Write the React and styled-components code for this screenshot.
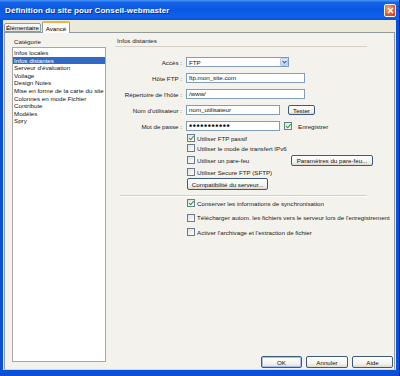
import styled, { createGlobalStyle } from "styled-components";

const GlobalStyle = createGlobalStyle`
  html, body {
    margin: 0;
    padding: 0;
    background: #ece9d8;
  }
  body {
    font-family: "Liberation Sans", Arial, sans-serif;
  }
`;

const categories = [
  "Infos locales",
  "Infos distantes",
  "Serveur d'évaluation",
  "Voilage",
  "Design Notes",
  "Mise en forme de la carte du site",
  "Colonnes en mode Fichier",
  "Contribute",
  "Modèles",
  "Spry",
];

export default function App() {
  return (
    <>
      <GlobalStyle />
      <Window>
        <TitleBar>
          <Title>Définition du site pour Conseil-webmaster</Title>
          <CloseButton>
            <svg width="7" height="7" viewBox="0 0 7 7">
              <path d="M1 1L6 6M6 1L1 6" stroke="#fff" strokeWidth="1.4" />
            </svg>
          </CloseButton>
        </TitleBar>
        <Body>
          <TabStrip>
            <Tab>Élémentaire</Tab>
            <Tab active>Avancé</Tab>
          </TabStrip>
          <Panel>
            <Sidebar>
              <SideLabel>Catégorie</SideLabel>
              <List>
                {categories.map((c) => (
                  <ListItem key={c} selected={c === "Infos distantes"}>
                    {c}
                  </ListItem>
                ))}
              </List>
            </Sidebar>
            <Main>
              <Heading>Infos distantes</Heading>
              <Form>
                <Label>Accès&nbsp;:</Label>
                <Field>
                  <Select>
                    <span>FTP</span>
                    <DropArrow>
                      <svg width="5" height="4" viewBox="0 0 5 4">
                        <path d="M0.5 0.8L2.5 2.8L4.5 0.8" stroke="#4d6185" strokeWidth="1.2" fill="none" />
                      </svg>
                    </DropArrow>
                  </Select>
                </Field>
                <Label>Hôte FTP&nbsp;:</Label>
                <Field>
                  <Input w={119}>ftp.mon_site.com</Input>
                </Field>
                <Label>Répertoire de l'hôte&nbsp;:</Label>
                <Field>
                  <Input w={119}>/www/</Input>
                </Field>
                <Label>Nom d'utilisateur&nbsp;:</Label>
                <Field gap={8}>
                  <Input w={94}>nom_utilisateur</Input>
                  <Button w={27} h={10}>Tester</Button>
                </Field>
                <Label>Mot de passe&nbsp;:</Label>
                <Field gap={4}>
                  <Input w={94}>
                    <Dots>•••••••••••</Dots>
                  </Input>
                  <Check checked />
                  <Text>Enregistrer</Text>
                </Field>
              </Form>
              <Options>
                <OptionRow>
                  <Check checked />
                  <Text>Utiliser FTP passif</Text>
                </OptionRow>
                <OptionRow>
                  <Check />
                  <Text>Utiliser le mode de transfert IPv6</Text>
                </OptionRow>
                <OptionRow tall>
                  <OptionLabel>
                    <Check />
                    <Text>Utiliser un pare-feu</Text>
                  </OptionLabel>
                  <Button w={82} h={11}>Paramètres du pare-feu...</Button>
                </OptionRow>
                <OptionRow>
                  <Check />
                  <Text>Utiliser Secure FTP (SFTP)</Text>
                </OptionRow>
                <CompatRow>
                  <Button w={81} h={12}>Compatibilité du serveur...</Button>
                </CompatRow>
              </Options>
              <Separator />
              <SyncOptions>
                <OptionRow>
                  <Check checked />
                  <Text>Conserver les informations de synchronisation</Text>
                </OptionRow>
                <OptionRow>
                  <Check />
                  <Text>Télécharger autom. les fichiers vers le serveur lors de l'enregistrement</Text>
                </OptionRow>
                <OptionRow>
                  <Check />
                  <Text>Activer l'archivage et l'extraction de fichier</Text>
                </OptionRow>
              </SyncOptions>
              <Footer>
                <Button w={41} h={12} primary>OK</Button>
                <Button w={42} h={12}>Annuler</Button>
                <Button w={41} h={12}>Aide</Button>
              </Footer>
            </Main>
          </Panel>
        </Body>
      </Window>
    </>
  );
}

const Window = styled.div`
  width: 400px;
  height: 376px;
  display: flex;
  flex-direction: column;
  background: #0b50d8;
  box-sizing: border-box;
  border-right: 1px solid #0a1f86;
`;

const TitleBar = styled.div`
  height: 20px;
  flex-shrink: 0;
  display: flex;
  align-items: center;
  justify-content: space-between;
  padding: 0 3px 0 5px;
  background: linear-gradient(
    #4a95f7 0%,
    #1563e6 12%,
    #0a58e2 45%,
    #0e61ec 85%,
    #0a4fd0 100%
  );
`;

const Title = styled.div`
  color: #ffffff;
  font-size: 8px;
  font-weight: bold;
  letter-spacing: 0.1px;
  text-shadow: 1px 1px 0 #0a2f8f;
`;

const CloseButton = styled.div`
  width: 10px;
  height: 11px;
  border: 1px solid #f4f4f4;
  border-radius: 2px;
  background: radial-gradient(circle at 35% 30%, #f0a080, #e05a2c 60%, #c0401c);
  display: flex;
  align-items: center;
  justify-content: center;
`;

const Body = styled.div`
  flex: 1;
  display: flex;
  flex-direction: column;
  margin: 0 3px 6px 3px;
  padding: 0 1px;
  background: #ece9d8;
`;

const TabStrip = styled.div`
  height: 12px;
  display: flex;
  align-items: flex-end;
  border-bottom: 1px solid #919b9c;
`;

const Tab = styled.div`
  height: ${(p) => (p.active ? "12px" : "9px")};
  width: ${(p) => (p.active ? "28px" : "37px")};
  margin-bottom: ${(p) => (p.active ? "-1px" : "0")};
  box-sizing: border-box;
  font-size: 6.2px;
  color: #000;
  display: flex;
  align-items: ${(p) => (p.active ? "flex-start" : "center")};
  justify-content: center;
  padding-top: ${(p) => (p.active ? "2px" : "0")};
  border: 1px solid #919b9c;
  border-bottom: ${(p) => (p.active ? "none" : "1px solid #919b9c")};
  border-top: ${(p) => (p.active ? "2px solid #f2b43c" : "1px solid #919b9c")};
  border-radius: 2px 2px 0 0;
  background: ${(p) =>
    p.active ? "#fcfcfe" : "linear-gradient(#ffffff, #f0efe8 70%, #e4e2d6)"};
  & + & {
    margin-left: 1px;
  }
`;

const Panel = styled.div`
  flex: 1;
  display: flex;
  background: #f3f2ec;
  border: 1px solid #919b9c;
  border-top: none;
  border-bottom-color: #d8d6cc;
`;

const Sidebar = styled.div`
  width: 94px;
  margin-left: 7px;
  display: flex;
  flex-direction: column;
  padding-top: 5px;
`;

const SideLabel = styled.div`
  font-size: 6.2px;
  line-height: 8px;
  height: 8px;
  padding-left: 2px;
  margin-bottom: 1px;
  color: #1a1a1a;
`;

const List = styled.div`
  flex: 1;
  margin-bottom: 7px;
  background: #ffffff;
  border: 1px solid #a7a6aa;
  padding-top: 1px;
`;

const ListItem = styled.div`
  font-size: 6.2px;
  line-height: 7.6px;
  height: 7.6px;
  padding-left: 1px;
  white-space: nowrap;
  color: ${(p) => (p.selected ? "#ffffff" : "#111")};
  background: ${(p) => (p.selected ? "#316ac5" : "transparent")};
`;

const Main = styled.div`
  flex: 1;
  margin-left: 9px;
  padding-right: 1px;
  padding-bottom: 1px;
  display: flex;
  flex-direction: column;
`;

const Heading = styled.div`
  width: 250px;
  font-size: 6.2px;
  line-height: 8px;
  padding: 4px 0 1px 2px;
  border-bottom: 1px solid #d4d1c4;
  color: #1a1a1a;
`;

const Form = styled.div`
  display: grid;
  grid-template-columns: 67px auto;
  column-gap: 4px;
  row-gap: 6px;
  margin-top: 10px;
  align-items: center;
`;

const Label = styled.div`
  font-size: 6.2px;
  text-align: right;
  white-space: nowrap;
  color: #1a1a1a;
`;

const Field = styled.div`
  display: flex;
  align-items: center;
  gap: ${(p) => p.gap || 0}px;
  height: 10px;
`;

const Input = styled.div`
  width: ${(p) => p.w}px;
  height: 10px;
  box-sizing: border-box;
  border: 1px solid #7f9db9;
  background: #ffffff;
  font-size: 6.2px;
  line-height: 8px;
  padding-left: 2px;
  color: #111;
  white-space: nowrap;
  overflow: hidden;
`;

const Dots = styled.span`
  font-size: 9px;
  font-weight: bold;
  line-height: 8px;
  letter-spacing: 0.6px;
  color: #111;
`;

const Select = styled.div`
  width: 103px;
  height: 10px;
  box-sizing: border-box;
  border: 1px solid #7f9db9;
  background: #ffffff;
  display: flex;
  align-items: center;
  justify-content: space-between;
  font-size: 6.2px;
  padding-left: 2px;
  color: #111;
`;

const DropArrow = styled.div`
  width: 8px;
  height: 8px;
  box-sizing: border-box;
  border: 1px solid #b6c9f4;
  border-radius: 1px;
  background: linear-gradient(#e6eefc, #c1d3fb);
  display: flex;
  align-items: center;
  justify-content: center;
`;

const Button = styled.div`
  width: ${(p) => p.w}px;
  height: ${(p) => p.h}px;
  box-sizing: border-box;
  border: 1px solid #3c5a80;
  border-radius: 2px;
  background: linear-gradient(#ffffff, #f2f1ec 70%, #dcd8cc);
  box-shadow: ${(p) => (p.primary ? "inset 0 0 0 1px #a8c0ee" : "none")};
  font-size: 6.2px;
  color: #111;
  display: flex;
  align-items: center;
  justify-content: center;
  white-space: nowrap;
  flex-shrink: 0;
`;

const Check = styled.div`
  width: 8px;
  height: 8px;
  box-sizing: border-box;
  flex-shrink: 0;
  border: 1px solid #6a7c94;
  background: linear-gradient(135deg, #e0e0da, #ffffff);
  position: relative;
  &::after {
    content: "";
    display: ${(p) => (p.checked ? "block" : "none")};
    position: absolute;
    left: 1.5px;
    top: 0px;
    width: 2px;
    height: 3.5px;
    border: solid #21a121;
    border-width: 0 1.3px 1.3px 0;
    transform: rotate(40deg);
  }
`;

const Text = styled.span`
  font-size: 6.2px;
  color: #1a1a1a;
  white-space: nowrap;
  margin-left: 2px;
`;

const Options = styled.div`
  display: flex;
  flex-direction: column;
  margin-top: 2px;
  padding-left: 72px;
`;

const OptionRow = styled.div`
  display: flex;
  align-items: center;
  height: ${(p) => (p.tall ? "14px" : "10px")};
`;

const OptionLabel = styled.div`
  width: 104px;
  display: flex;
  align-items: center;
`;

const CompatRow = styled.div`
  margin-top: 1px;
`;

const Separator = styled.div`
  width: 247px;
  margin: 5px 0 0 5px;
  border-top: 1px solid #d4d1c4;
  border-bottom: 1px solid #ffffff;
`;

const SyncOptions = styled.div`
  display: flex;
  flex-direction: column;
  gap: 4.5px;
  margin-top: 1px;
  padding-left: 72px;
`;

const Footer = styled.div`
  margin-top: auto;
  display: flex;
  justify-content: flex-end;
  gap: 4px;
`;
